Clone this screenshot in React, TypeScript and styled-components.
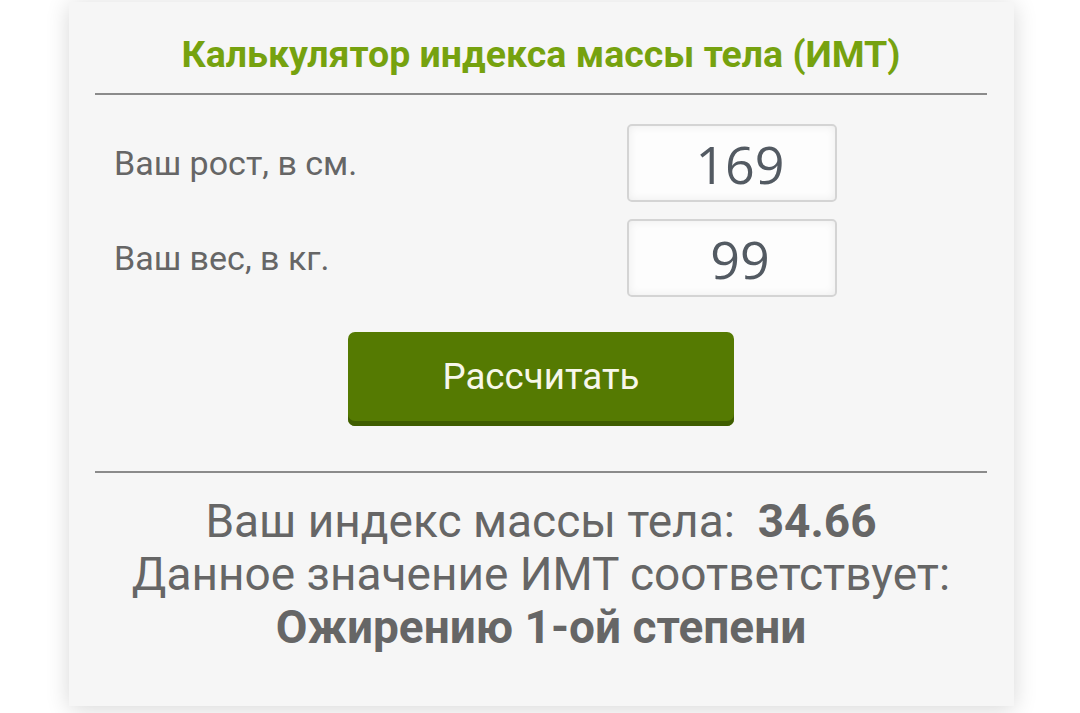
import React from "react";
import styled, { createGlobalStyle } from "styled-components";

const Global = createGlobalStyle`
  html, body { margin: 0; padding: 0; background: #ffffff; }
  body { font-family: Roboto, "Liberation Sans", Arial, sans-serif; }
`;

const Page = styled.div`
  padding: 2px 0 8px 69px;
`;

const Card = styled.div`
  width: 945px;
  box-sizing: border-box;
  background: #f6f6f6;
  box-shadow: 0 3px 22px rgba(0, 0, 0, 0.16);
  padding: 31px 27px 52px 26px;
  display: flex;
  flex-direction: column;
`;

const Title = styled.h1`
  margin: 0;
  text-align: center;
  color: #76a20f;
  font-family: Roboto, "Liberation Sans", sans-serif;
  font-weight: 700;
  font-size: 37.5px;
  line-height: 42px;
  padding-bottom: 18px;
`;

const Divider = styled.hr`
  margin: 0;
  border: none;
  height: 2px;
  background: #8b8b8b;
`;

const Form = styled.div`
  display: flex;
  flex-direction: column;
  gap: 17px;
  padding: 29px 0 0 19px;
`;

const Row = styled.div`
  display: flex;
  align-items: center;
  padding-right: 150px;
`;

const Label = styled.label`
  flex: 1;
  color: #666666;
  font-family: Roboto, "Liberation Sans", sans-serif;
  font-size: 34px;
`;

const NumberBox = styled.div`
  width: 210px;
  height: 78px;
  box-sizing: border-box;
  border: 2px solid #d4d4d4;
  border-radius: 5px;
  background: #fdfdfd;
  box-shadow: inset 0 0 10px rgba(0, 0, 0, 0.07);
  display: flex;
  align-items: center;
  justify-content: center;
  color: #535a62;
  font-family: "Open Sans", "Noto Sans", sans-serif;
  font-size: 52px;
  padding-left: 16px;
`;

const ButtonWrap = styled.div`
  display: flex;
  justify-content: center;
  padding: 35px 0 45px;
`;

const CalcButton = styled.button`
  width: 386px;
  height: 94px;
  border: none;
  border-radius: 7px;
  background: #557a02;
  box-shadow: inset 0 -5px 0 #3f5d00;
  color: #f7f7ea;
  font-family: Roboto, "Liberation Sans", sans-serif;
  font-size: 36.7px;
  padding: 0 0 6px;
  cursor: pointer;
`;

const Result = styled.div`
  padding-top: 22px;
  text-align: center;
  color: #666666;
  font-family: Roboto, "Liberation Sans", sans-serif;
  font-size: 46px;
  line-height: 53px;
`;

const Line = styled.div``;

const Strong = styled.b`
  font-weight: 700;
`;

export default function App() {
  return (
    <>
      <Global />
      <Page>
        <Card>
          <Title>Калькулятор индекса массы тела (ИМТ)</Title>
          <Divider />
          <Form>
            <Row>
              <Label>Ваш рост, в см.</Label>
              <NumberBox>169</NumberBox>
            </Row>
            <Row>
              <Label>Ваш вес, в кг.</Label>
              <NumberBox>99</NumberBox>
            </Row>
          </Form>
          <ButtonWrap>
            <CalcButton>Рассчитать</CalcButton>
          </ButtonWrap>
          <Divider />
          <Result>
            <Line>
              Ваш индекс массы тела:&nbsp; <Strong>34.66</Strong>
            </Line>
            <Line>Данное значение ИМТ соответствует:</Line>
            <Line>
              <Strong>Ожирению 1-ой степени</Strong>
            </Line>
          </Result>
        </Card>
      </Page>
    </>
  );
}
